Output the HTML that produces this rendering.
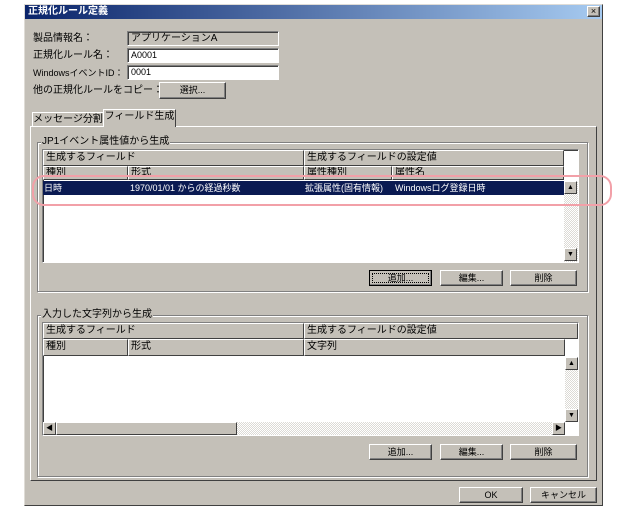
<!DOCTYPE html>
<html><head><meta charset="utf-8"><style>
*{box-sizing:border-box}
body{margin:0;width:622px;height:512px;background:#fff;position:relative;overflow:hidden;font-family:"Liberation Sans","Noto Sans CJK JP",sans-serif;font-size:10px;color:#000}
.a{position:absolute}
.dlg{left:24px;top:4px;width:579px;height:502px;background:#c4c0b8;border:1px solid;border-color:#dfdcd6 #404040 #404040 #dfdcd6}
.title{left:25px;top:5px;width:577px;height:14px;background:linear-gradient(90deg,#0a246a,#a6caf0);color:#fff;font-weight:bold;font-size:10px;line-height:14px;padding-left:3px}
.lbl{line-height:12px;white-space:nowrap}
.field{height:15px;border:1px solid;border-color:#808080 #fff #fff #808080;box-shadow:inset 1px 1px 0 #404040;background:#fff;padding-left:3px;line-height:13px;font-size:9px}
.btn{height:16px;background:#c4c0b8;border:1px solid;border-color:#fff #404040 #404040 #fff;box-shadow:inset -1px -1px 0 #808080;text-align:center;line-height:14px;font-size:9px}
.grp{border:1px solid #808080;box-shadow:1px 1px 0 #fff, inset 1px 1px 0 #fff}
.gl{background:#c4c0b8;padding:0 1px;line-height:12px}
.tbl{background:#fff;border:1px solid;border-color:#808080 #fff #fff #808080;box-shadow:inset 1px 1px 0 #404040}
.hd{background:#c4c0b8;border:1px solid;border-color:#fff #404040 #404040 #fff;line-height:13px;padding-left:2px;white-space:nowrap;overflow:hidden}
.sb{background:repeating-conic-gradient(#fff 0 25%,#dcdad5 0 50%) 0 0/2px 2px}
.arr{width:13px;height:13px;background:#c4c0b8;border:1px solid;border-color:#fff #404040 #404040 #fff;font-size:7px;text-align:center;line-height:11px}
</style></head><body>
<div class="a dlg"></div>
<div class="a title">正規化ルール定義</div>
<div class="a btn" style="left:587px;top:6px;width:13px;height:11px;line-height:9px;font-size:9px">×</div>

<div class="a lbl" style="left:33px;top:33px">製品情報名：</div>
<div class="a field" style="left:127px;top:31px;width:152px;background:#c4c0b8;font-size:10px">アプリケーションA</div>
<div class="a lbl" style="left:33px;top:50px">正規化ルール名：</div>
<div class="a field" style="left:127px;top:48px;width:152px">A0001</div>
<div class="a lbl" style="left:33px;top:67px;font-size:9px">WindowsイベントID：</div>
<div class="a field" style="left:127px;top:65px;width:152px">0001</div>
<div class="a lbl" style="left:33px;top:85px">他の正規化ルールをコピー：</div>
<div class="a btn" style="left:159px;top:82px;width:67px;height:17px">選択...</div>

<div class="a" style="left:30px;top:126px;width:567px;height:355px;border:1px solid;border-color:#fff #404040 #404040 #fff"></div>
<div class="a" style="left:32px;top:112px;width:72px;height:14px;border:1px solid;border-bottom:none;border-color:#fff #404040 #fff #fff;line-height:13px;text-align:center">メッセージ分割</div>
<div class="a" style="left:103px;top:109px;width:73px;height:18px;background:#c4c0b8;border:1px solid;border-bottom:none;border-color:#fff #404040 #fff #fff;line-height:14px;text-align:center">フィールド生成</div>

<div class="a grp" style="left:37px;top:142px;width:551px;height:150px"></div>
<div class="a gl" style="left:41px;top:136px">JP1イベント属性値から生成</div>
<div class="a tbl" style="left:42px;top:149px;width:537px;height:114px"></div>
<div class="a hd" style="left:43px;top:150px;width:261px;height:16px">生成するフィールド</div>
<div class="a hd" style="left:304px;top:150px;width:260px;height:16px">生成するフィールドの設定値</div>
<div class="a hd" style="left:43px;top:166px;width:85px;height:14px;line-height:11px">種別</div>
<div class="a hd" style="left:128px;top:166px;width:176px;height:14px;line-height:11px">形式</div>
<div class="a hd" style="left:304px;top:166px;width:88px;height:14px;line-height:11px">属性種別</div>
<div class="a hd" style="left:392px;top:166px;width:172px;height:14px;line-height:11px">属性名</div>
<div class="a" style="left:43px;top:181px;width:521px;height:14px;background:#0a1a52;color:#fff;line-height:14px;font-size:9px;white-space:nowrap">
<span class="a" style="left:1px">日時</span><span class="a" style="left:87px">1970/01/01 からの経過秒数</span><span class="a" style="left:262px">拡張属性(固有情報)</span><span class="a" style="left:352px">Windowsログ登録日時</span></div>
<div class="a sb" style="left:564px;top:181px;width:14px;height:81px"></div>
<div class="a arr" style="left:564px;top:181px">▲</div>
<div class="a arr" style="left:564px;top:248px">▼</div>
<div class="a btn" style="left:369px;top:270px;width:63px;outline:1px dotted #000;outline-offset:-4px;border-color:#000">追加...</div>
<div class="a btn" style="left:440px;top:270px;width:63px">編集...</div>
<div class="a btn" style="left:510px;top:270px;width:67px">削除</div>

<div class="a grp" style="left:37px;top:315px;width:551px;height:162px"></div>
<div class="a gl" style="left:41px;top:309px">入力した文字列から生成</div>
<div class="a tbl" style="left:42px;top:322px;width:537px;height:114px"></div>
<div class="a hd" style="left:43px;top:323px;width:261px;height:16px">生成するフィールド</div>
<div class="a hd" style="left:304px;top:323px;width:274px;height:16px">生成するフィールドの設定値</div>
<div class="a hd" style="left:43px;top:339px;width:85px;height:17px">種別</div>
<div class="a hd" style="left:128px;top:339px;width:176px;height:17px">形式</div>
<div class="a hd" style="left:304px;top:339px;width:261px;height:17px">文字列</div>
<div class="a sb" style="left:565px;top:357px;width:13px;height:65px"></div>
<div class="a arr" style="left:565px;top:357px">▲</div>
<div class="a arr" style="left:565px;top:409px">▼</div>
<div class="a sb" style="left:43px;top:422px;width:522px;height:13px"></div>
<div class="a arr" style="left:43px;top:422px">◀</div>
<div class="a" style="left:56px;top:422px;width:181px;height:13px;background:#c4c0b8;border:1px solid;border-color:#fff #404040 #404040 #fff"></div>
<div class="a arr" style="left:552px;top:422px">▶</div>
<div class="a btn" style="left:369px;top:444px;width:63px">追加...</div>
<div class="a btn" style="left:440px;top:444px;width:63px">編集...</div>
<div class="a btn" style="left:510px;top:444px;width:67px">削除</div>

<div class="a btn" style="left:459px;top:487px;width:64px">OK</div>
<div class="a btn" style="left:530px;top:487px;width:67px">キャンセル</div>

<div class="a" style="left:32px;top:175px;width:580px;height:31px;border:2px solid #f2a0a8;border-radius:12px"></div>
</body></html>
